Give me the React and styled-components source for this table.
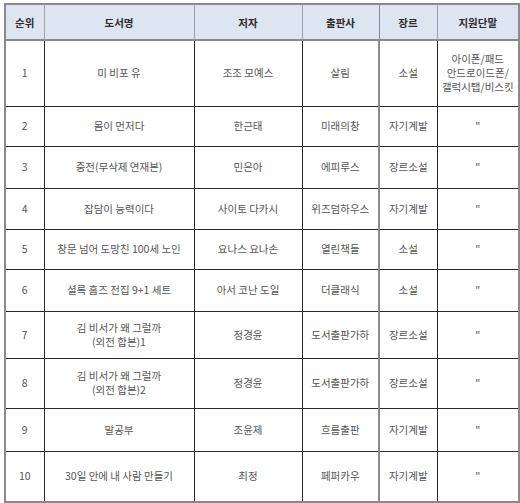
import React from "react"
import styled, { createGlobalStyle } from "styled-components"

const GlobalStyle = createGlobalStyle`
  body {
    margin: 0;
    background: #ffffff;
  }
`

const columns = [
  { title: "순위", width: 39 },
  { title: "도서명", width: 150 },
  { title: "저자", width: 108 },
  { title: "출판사", width: 77 },
  { title: "장르", width: 58 },
  { title: "지원단말", width: 82 },
]

const books = [
  { rank: 1, title: ["미 비포 유"], author: "조조 모예스", publisher: "살림", genre: "소설", device: ["아이폰/패드", "안드로이드폰/", "갤럭시탭/비스킷"], height: 66 },
  { rank: 2, title: ["몸이 먼저다"], author: "한근태", publisher: "미래의창", genre: "자기계발", height: 40 },
  { rank: 3, title: ["중전(무삭제 연재본)"], author: "민은아", publisher: "에피루스", genre: "장르소설", height: 42 },
  { rank: 4, title: ["잡담이 능력이다"], author: "사이토 다카시", publisher: "위즈덤하우스", genre: "자기계발", height: 41 },
  { rank: 5, title: ["창문 넘어 도망친 100세 노인"], author: "요나스 요나손", publisher: "열린책들", genre: "소설", height: 40 },
  { rank: 6, title: ["셜록 홈즈 전집 9+1 세트"], author: "아서 코난 도일", publisher: "더클래식", genre: "소설", height: 42 },
  { rank: 7, title: ["김 비서가 왜 그럴까", "(외전 합본)1"], author: "정경윤", publisher: "도서출판가하", genre: "장르소설", height: 47 },
  { rank: 8, title: ["김 비서가 왜 그럴까", "(외전 합본)2"], author: "정경윤", publisher: "도서출판가하", genre: "장르소설", height: 50 },
  { rank: 9, title: ["말공부"], author: "조윤제", publisher: "흐름출판", genre: "자기계발", height: 43 },
  { rank: 10, title: ["30일 안에 내 사람 만들기"], author: "최정", publisher: "페퍼카우", genre: "자기계발", height: 51 },
]

const Page = styled.div`
  padding: 3px 0 0 4px;
`

const RankTable = styled.table`
  width: 514px;
  table-layout: fixed;
  border-collapse: collapse;
  border: 2px solid #8a8a8a;
  font-family: "Noto Sans CJK KR", "Noto Sans", sans-serif;
`

const HeadCell = styled.th`
  height: 34px;
  padding: 0;
  background: #dce5f0;
  border-bottom: 2px solid #8a8a8a;
  border-left: 1px solid ${(props) => (props.grey ? "#8a8a8a" : "#9aa3ad")};
  color: #2c2c2c;
  font-size: 10.5px;
  font-weight: bold;
  text-align: center;
  vertical-align: middle;
`

const Row = styled.tr`
  height: ${(props) => props.h}px;
`

const Cell = styled.td`
  padding: 0 1px;
  border-top: 1px solid #2a2a2a;
  border-left: ${(props) => (props.grey ? "2px solid #8a8a8a" : "1px solid #2a2a2a")};
  color: #555555;
  font-size: 10.5px;
  line-height: 14px;
  text-align: center;
  vertical-align: middle;
  white-space: nowrap;
`

const Lines = ({ lines }) =>
  lines.map((line, index) => <div key={index}>{line}</div>)

const App = () => (
  <>
    <GlobalStyle />
    <Page>
      <RankTable>
        <colgroup>
          {columns.map((col) => (
            <col key={col.title} style={{ width: col.width }} />
          ))}
        </colgroup>
        <thead>
          <tr>
            {columns.map((col, index) => (
              <HeadCell key={col.title} grey={index === 4}>
                {col.title}
              </HeadCell>
            ))}
          </tr>
        </thead>
        <tbody>
          {books.map((book) => (
            <Row key={book.rank} h={book.height}>
              <Cell>{book.rank}</Cell>
              <Cell>
                <Lines lines={book.title} />
              </Cell>
              <Cell>{book.author}</Cell>
              <Cell>{book.publisher}</Cell>
              <Cell grey>{book.genre}</Cell>
              <Cell>{book.device ? <Lines lines={book.device} /> : "\""}</Cell>
            </Row>
          ))}
        </tbody>
      </RankTable>
    </Page>
  </>
)

export default App
